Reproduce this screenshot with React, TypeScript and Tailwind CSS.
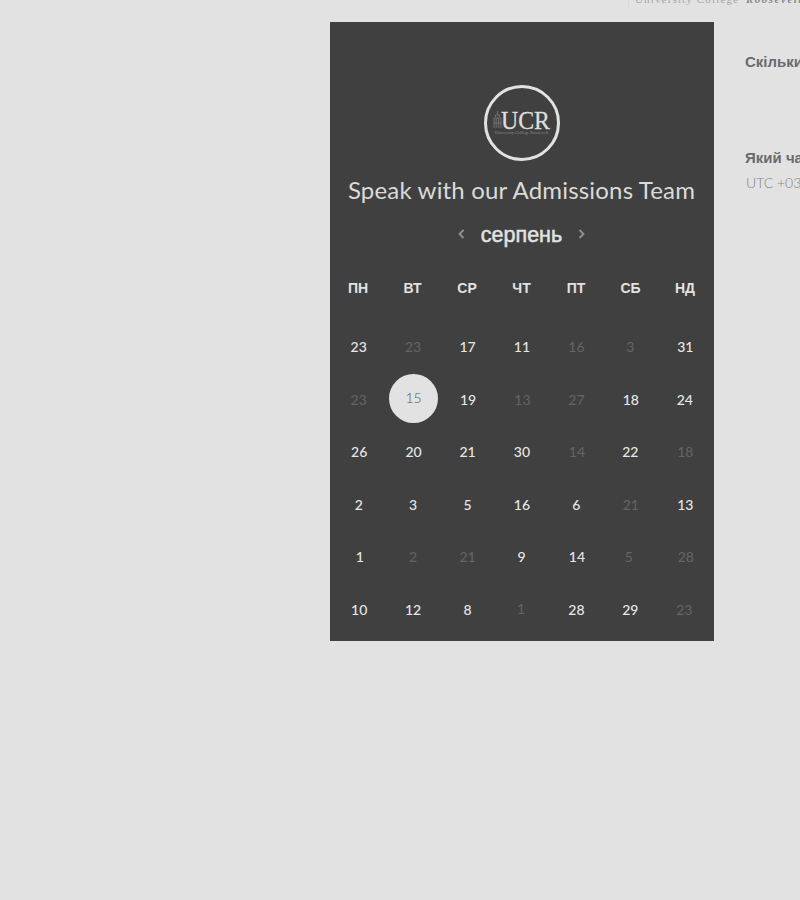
import React from 'react';
import clsx from 'clsx';

type Day = { label: string; muted?: boolean; selected?: boolean; nudge?: string };

const on = (n: number, nudge?: string): Day => ({ label: String(n), nudge });
const off = (n: number, nudge?: string): Day => ({ label: String(n), muted: true, nudge });

const weekdays = ['ПН', 'ВТ', 'СР', 'ЧТ', 'ПТ', 'СБ', 'НД'];

const weeks: Day[][] = [
  [on(23), off(23), on(17), on(11), off(16), off(3, 'pr-px'), on(31)],
  [off(23), { label: '15', selected: true }, on(19, 'pl-px'), off(13, 'pl-px'), off(27), on(18), on(24, 'pr-px')],
  [on(26, 'pl-px'), on(20, 'pl-px'), on(21), on(30), off(14, 'pl-px'), on(22, 'pr-px'), off(18)],
  [on(2), on(3), on(5), on(16), on(6), off(21), on(13)],
  [on(1, 'pl-0.5'), off(2), off(21), on(9, 'pr-px'), on(14, 'pl-px'), off(5, 'pr-1 pb-px'), off(28, 'pl-px')],
  [on(10, 'pl-px'), on(12), on(8), off(1, 'pr-0.5 pb-0.5'), on(28), on(29, 'pr-px'), off(23, 'pr-0.5')],
];

function Chevron({ path }: { path: string }) {
  return (
    <svg className="h-3 w-2" viewBox="0 0 8 12" fill="none" stroke="#929292" strokeWidth="1.8">
      <path d={path} />
    </svg>
  );
}

function Logo() {
  return (
    <div className="flex size-[76px] items-center justify-center rounded-full border-[3px] border-[#e2e2e2]">
      <svg width="60" height="32" viewBox="0 0 60 32">
        <g fill="none" stroke="#777777" strokeWidth="0.9">
          <path d="M5.5 4v4M3.5 10V8h4v2M2 21V11h7v10M4.2 11v10M6.7 11v10M2 16h7" />
        </g>
        <text x="9" y="21.5" fontFamily="Liberation Serif, serif" fontSize="26" fill="#dedede" stroke="#dedede" strokeWidth="0.3" textLength="49" lengthAdjust="spacingAndGlyphs">
          UCR
        </text>
        <text x="3" y="27" fontFamily="Liberation Serif, serif" fontSize="5" fill="#8c8c8c" textLength="53" lengthAdjust="spacingAndGlyphs">
          University College Roosevelt
        </text>
      </svg>
    </div>
  );
}

function DayCell({ day }: { day: Day }) {
  return (
    <div className={clsx('flex h-[52.5px] items-center justify-center', day.nudge)}>
      {day.selected ? (
        <span className="-mt-[3px] ml-px flex size-[49px] shrink-0 items-center justify-center rounded-full bg-[#e2e2e2] pb-px font-light text-[#565656]">
          {day.label}
        </span>
      ) : (
        <span className={day.muted ? 'text-[#656565]' : 'font-medium text-[#e7e7e7]'}>{day.label}</span>
      )}
    </div>
  );
}

export default function App() {
  return (
    <div className="flex h-[900px] w-[800px] flex-col overflow-hidden bg-[#e2e2e2] font-['Lato','Noto_Sans',sans-serif]">
      <header className="flex h-[22px] shrink-0 justify-end overflow-hidden">
        <div className="-mt-[8px] flex h-[15px] w-[172px] shrink-0 gap-[6px] whitespace-nowrap border-l border-[#d8d8d8] pl-[6px] font-['Liberation_Serif',serif] text-[11px] leading-[15px] text-[#a6a6a6]">
          <span className="w-[105px] shrink-0 tracking-[1.15px]">University College</span>
          <span className="font-bold italic tracking-[1.5px] text-[#898989]">Roosevelt</span>
        </div>
      </header>
      <main className="flex h-[619px] shrink-0 pl-[329.5px]">
        <section className="flex w-[384px] shrink-0 flex-col items-center bg-[#404040] pt-[63px]">
          <Logo />
          <h1 className="mt-[13px] whitespace-nowrap text-[24px] leading-[32px] tracking-[0.18px] text-[#dadada]">
            Speak with our Admissions Team
          </h1>
          <div className="mt-[13px] flex h-[32px] items-center gap-[15.5px]">
            <Chevron path="M6.5 1 2.5 5l4 4" />
            <h2 className="font-['Liberation_Sans',sans-serif] text-[21.5px] leading-[32px] text-[#e2e2e2] [-webkit-text-stroke:0.5px_#e2e2e2]">серпень</h2>
            <Chevron path="M1.5 1 5.5 5l-4 4" />
          </div>
          <div className="mt-[27px] grid w-[381.5px] grid-cols-7 text-center font-['Liberation_Sans',sans-serif] text-[14px] font-bold leading-[20px] text-[#e2e2e2]">
            {weekdays.map((name) => (
              <span key={name}>{name}</span>
            ))}
          </div>
          <div className="mt-[23px] grid w-[382px] grid-cols-7 pl-px text-[14px] leading-[20px]">
            {weeks.flat().map((day, index) => (
              <DayCell key={index} day={day} />
            ))}
          </div>
        </section>
        <aside className="w-[86.5px] shrink-0 whitespace-nowrap pl-[31.5px] pt-[30px] font-['Liberation_Sans',sans-serif] text-[#6b6b6b]">
          <h3 className="text-[15px] font-bold leading-[20px]">Скільки часу</h3>
          <h3 className="mt-[76px] text-[15px] font-bold leading-[20px]">Який час</h3>
          <p className="mt-[5px] pl-px font-['Lato',sans-serif] text-[14px] font-light leading-[20px] text-[#858585]">UTC +03:00</p>
        </aside>
      </main>
    </div>
  );
}
